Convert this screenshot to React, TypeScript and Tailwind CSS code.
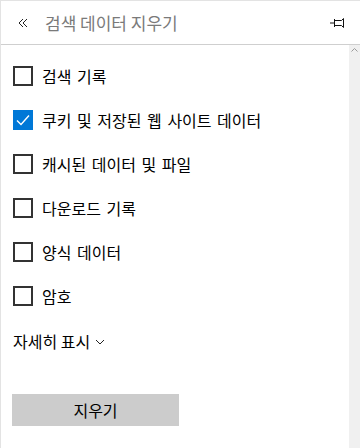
const items = [
  { label: '검색 기록', checked: false },
  { label: '쿠키 및 저장된 웹 사이트 데이터', checked: true },
  { label: '캐시된 데이터 및 파일', checked: false },
  { label: '다운로드 기록', checked: false },
  { label: '양식 데이터', checked: false },
  { label: '암호', checked: false },
];

function Box({ checked }: { checked: boolean }) {
  if (checked) {
    return (
      <div className="flex h-[20px] w-[20px] shrink-0 items-center justify-center bg-[#0078d7]">
        <svg width="16" height="16" viewBox="0 0 16 16" fill="none">
          <path d="M2 8.5l4 4 8-9" stroke="#fff" strokeWidth="1.4" />
        </svg>
      </div>
    );
  }
  return <div className="h-[20px] w-[20px] shrink-0 border-2 border-[#333]" />;
}

export default function App() {
  return (
    <div
      className="flex h-[448px] w-[360px] flex-col border-l border-t border-[#e3e3e3] bg-white text-[#000]"
      style={{ fontFamily: '"Noto Sans CJK KR", "Noto Sans", sans-serif' }}
    >
      {/* header */}
      <div className="flex h-[44px] shrink-0 items-center border-b border-[#cfcfcf] pl-[17px] pr-[14px]">
        <svg width="10" height="10" viewBox="0 0 10 10" fill="none" className="mr-[17px]">
          <path d="M5 1L1 5l4 4M9 1L5 5l4 4" stroke="#222" strokeWidth="1" />
        </svg>
        <span className="flex-1 text-[17px] leading-none text-[#7a7a7a]">검색 데이터 지우기</span>
        <svg width="16" height="12" viewBox="0 0 16 12" fill="none">
          <path d="M0 6h4M4.5 2v8M4.5 3.5h7l2-2v9l-2-2h-7" stroke="#111" strokeWidth="1" />
        </svg>
      </div>

      <div className="flex min-h-0 flex-1">
        <div className="flex-1 pt-[9px]">
          {items.map((it) => (
            <div key={it.label} className="flex h-[44px] items-center gap-[9px] pl-[12px]">
              <Box checked={it.checked} />
              <span className="text-[16px] leading-none [word-spacing:2px]">{it.label}</span>
            </div>
          ))}
          <div className="flex h-[46px] items-center gap-[5px] pl-[12px]">
            <span className="text-[16px] leading-none">자세히 표시</span>
            <svg width="10" height="6" viewBox="0 0 10 6" fill="none" className="mt-[2px]">
              <path d="M1 1l4 4 4-4" stroke="#222" strokeWidth="1" />
            </svg>
          </div>
          <button
            type="button"
            className="ml-[11px] mt-[30px] flex h-[32px] w-[167px] items-center justify-center bg-[#cccccc] text-[16px] leading-none"
          >
            지우기
          </button>
        </div>
        <div className="flex w-[11px] shrink-0 justify-center bg-[#f0f0f0] pt-[3px]">
          <svg width="7" height="4" viewBox="0 0 7 4" fill="none">
            <path d="M0.5 3.5l3-3 3 3" stroke="#9a9a9a" strokeWidth="1" />
          </svg>
        </div>
      </div>
    </div>
  );
}
